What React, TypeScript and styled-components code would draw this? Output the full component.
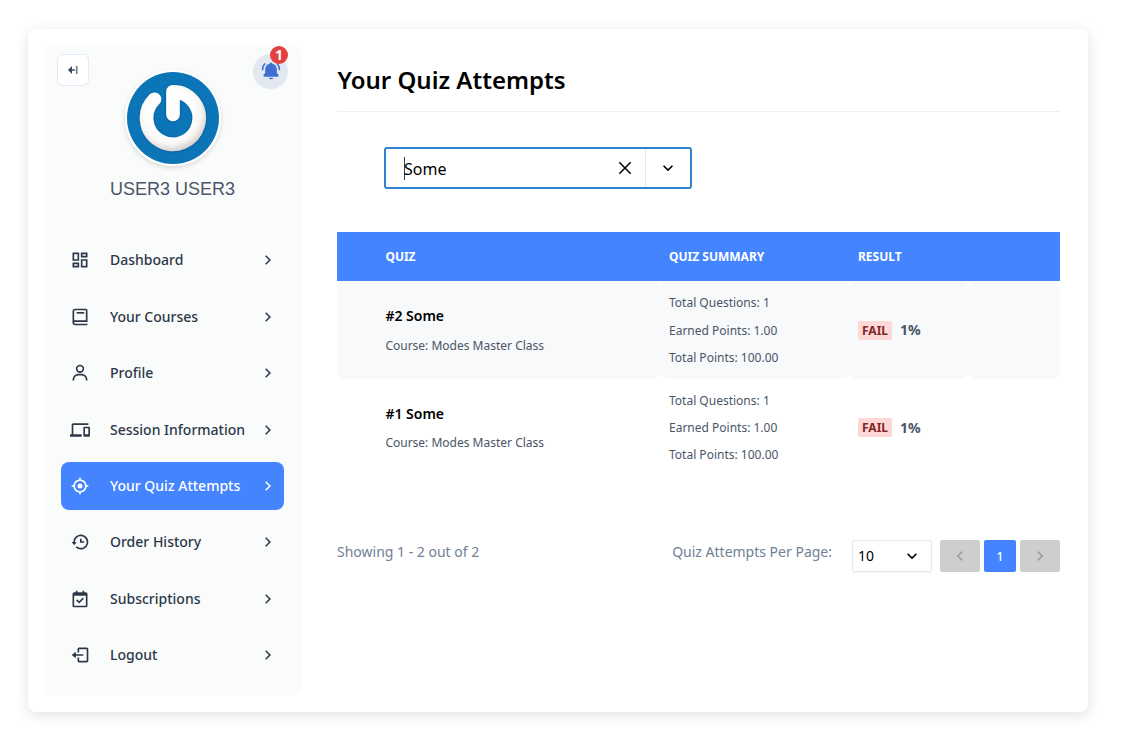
import React from 'react';
import styled, { createGlobalStyle } from 'styled-components';
import type { IconType } from 'react-icons';
import {
  BiBook,
  BiCalendarCheck,
  BiHistory,
  BiLogOut,
  BiSolidBellRing,
  BiTargetLock,
  BiUser,
} from 'react-icons/bi';
import {
  MdChevronLeft,
  MdChevronRight,
  MdDevices,
  MdExpandMore,
  MdOutlineDashboard,
} from 'react-icons/md';
import { RiArrowRightSLine } from 'react-icons/ri';

const GlobalStyle = createGlobalStyle`
  *, *::before, *::after { box-sizing: border-box; }
  body {
    margin: 0;
    background: #fff;
    color: #000;
    font-family: "Noto Sans", sans-serif;
    font-size: 16px;
    overflow: hidden;
  }
  button { font: inherit; border: 0; padding: 0; }
  h1, p { margin: 0; }
`;

const Page = styled.div`
  height: 745px;
  padding: 29px 37px 33px 28px;
`;

const Card = styled.div`
  display: flex;
  height: 683px;
  padding: 16px 28px 16px 16px;
  background: #fff;
  border-radius: 8px;
  box-shadow: 0 3px 14px rgba(0, 0, 0, 0.12);
`;

const Sidebar = styled.aside`
  flex: 0 0 257px;
  display: flex;
  flex-direction: column;
  background: #fafcfc;
  border-radius: 8px;
`;

const SidebarTop = styled.div`
  display: flex;
  justify-content: space-between;
  align-items: flex-start;
  height: 122px;
  padding: 9px 13px 0;
`;

const CollapseButton = styled.button`
  display: grid;
  place-items: center;
  width: 32px;
  height: 32px;
  background: #fff;
  border: 1px solid #e6e9fd;
  border-radius: 6px;
`;

const Avatar = styled.div`
  width: 96px;
  height: 96px;
  margin: 16px 0 0 4px;
  border: 2px solid #fff;
  border-radius: 50%;
  box-shadow: 0 2px 5px rgba(0, 0, 0, 0.14);
  svg { display: block; width: 92px; height: 92px; border-radius: 50%; }
`;

const Bell = styled.div`
  position: relative;
  display: grid;
  place-items: center;
  width: 35px;
  height: 35px;
  padding-bottom: 1px;
  background: #e2e8f0;
  color: #3f6fd1;
  border-radius: 50%;
`;

const BellCount = styled.span`
  position: absolute;
  top: -8px;
  right: 0;
  width: 18px;
  height: 18px;
  border-radius: 50%;
  background: #e53e3e;
  color: #fff;
  font-size: 14px;
  font-weight: 700;
  line-height: 18px;
  text-align: center;
`;

const UserName = styled.p`
  margin-top: 10px;
  height: 24px;
  color: #4a5568;
  font: 18px/24px "Liberation Sans", Arial, sans-serif;
  text-align: center;
`;

const Menu = styled.nav`
  display: flex;
  flex-direction: column;
  gap: 8px;
  padding: 35.4px 17px 0;
`;

const MenuItem = styled.a<{ $active?: boolean }>`
  display: flex;
  align-items: center;
  height: 48.4px;
  padding: 0 7px 0.4px 9px;
  border-radius: 8px;
  background: ${(p) => (p.$active ? '#4484ff' : 'transparent')};
  color: ${(p) => (p.$active ? '#fff' : '#2d3748')};
  font-size: 14px;
  font-weight: 500;
`;

const MenuLabel = styled.span`
  flex: 1;
  padding: 0 0 1px 20px;
  white-space: nowrap;
`;

const Main = styled.main`
  flex: 1;
  margin-left: 36px;
  min-width: 0;
`;

const Title = styled.h1`
  height: 67px;
  padding: 17px 0 0 0.4px;
  border-bottom: 1px solid #edf0f2;
  font-size: 24px;
  font-weight: 600;
  line-height: 36px;
`;

const Combo = styled.div`
  display: flex;
  width: 308px;
  height: 42px;
  margin: 35px 0 0 47px;
  border: 2px solid #3182ce;
  border-radius: 3px;
`;

const ComboValue = styled.div`
  flex: 1;
  display: flex;
  align-items: center;
  padding-left: 18px;
  line-height: 24px;
`;

const ComboText = styled.span`
  padding-top: 2px;
`;

const Caret = styled.span`
  width: 1px;
  height: 23px;
  margin-right: -1px;
  background: #333a48;
`;

const ComboAction = styled.button<{ $divided?: boolean }>`
  display: grid;
  place-items: center;
  width: ${(p) => (p.$divided ? '45px' : '40px')};
  background: transparent;
  border-left: ${(p) => (p.$divided ? '1px solid #e2e8f0' : '0')};
`;

const Table = styled.table`
  width: 100%;
  margin-top: 43px;
  table-layout: fixed;
  border-collapse: separate;
  border-spacing: 0;
`;

const HeadCell = styled.th`
  height: 49px;
  padding: 0 0 0 8px;
  background: #4484ff;
  color: #fff;
  font-size: 12px;
  font-weight: 700;
  line-height: 16px;
  text-align: left;
  &:first-child { padding-left: 48.4px; }
`;

const Cell = styled.td<{ $shaded?: boolean }>`
  height: 97.5px;
  padding: 1px 0 0 8px;
  background: ${(p) => (p.$shaded ? '#f7f9fb' : 'transparent')};
  border-radius: 8px;
  vertical-align: middle;
  &:first-child { padding-left: 48.4px; }
`;

const QuizName = styled.p`
  font-size: 14px;
  font-weight: 600;
  line-height: 21px;
`;

const CourseName = styled.p`
  margin-top: 10.8px;
  padding-bottom: 0.4px;
  color: #4a5568;
  font-size: 12px;
  line-height: 18px;
`;

const SummaryLine = styled.p`
  color: #4a5568;
  font-size: 12px;
  line-height: 27.2px;
`;

const Result = styled.div`
  display: flex;
  align-items: center;
  gap: 8px;
  color: #4a5568;
  font-size: 14px;
  font-weight: 700;
`;

const Percent = styled.span`
  padding-bottom: 0.8px;
`;

const FailTag = styled.span`
  height: 19.4px;
  padding: 0 4px;
  border-radius: 2px;
  background: #fed7d7;
  color: #822727;
  font-size: 12px;
  line-height: 19.4px;
`;

const Footer = styled.footer`
  display: flex;
  align-items: flex-start;
  margin-top: 64px;
  color: #718096;
  font-size: 14px;
  line-height: 24px;
`;

const Showing = styled.span`
  flex: 1;
`;

const PageSize = styled.div`
  display: flex;
  align-items: center;
  justify-content: space-between;
  width: 80px;
  height: 32px;
  margin: 0 8px 0 20px;
  padding: 0 9px 0 5px;
  border: 1px solid #e2e8f0;
  border-radius: 2px;
  box-shadow: 0 1px 2px rgba(0, 0, 0, 0.05);
  color: #000;
`;

const Pager = styled.div`
  display: flex;
  gap: 4px;
`;

const PagerButton = styled.button<{ $current?: boolean }>`
  display: grid;
  place-items: center;
  width: ${(p) => (p.$current ? '32px' : '40px')};
  height: 32px;
  padding-top: ${(p) => (p.$current ? '1px' : '0')};
  border-radius: 2px;
  background: ${(p) => (p.$current ? '#4484ff' : '#cecece')};
  color: ${(p) => (p.$current ? '#fff' : '#a0a0a0')};
  font-size: 12px;
  font-weight: 500;
`;

const menu: { label: string; icon: IconType; active?: boolean }[] = [
  { label: 'Dashboard', icon: MdOutlineDashboard },
  { label: 'Your Courses', icon: BiBook },
  { label: 'Profile', icon: BiUser },
  { label: 'Session Information', icon: MdDevices },
  { label: 'Your Quiz Attempts', icon: BiTargetLock, active: true },
  { label: 'Order History', icon: BiHistory },
  { label: 'Subscriptions', icon: BiCalendarCheck },
  { label: 'Logout', icon: BiLogOut },
];

const attempts = [
  { name: '#2 Some', questions: '1', earned: '1.00', total: '100.00', percent: '1%' },
  { name: '#1 Some', questions: '1', earned: '1.00', total: '100.00', percent: '1%' },
];

const CollapseIcon = () => (
  <svg width="10" height="8" viewBox="0 0 10 8">
    <path d="M0 4 4 0v3.3h2.9v1.4H4V8z" fill="#3c485c" />
    <rect x="7.9" y="0" width="1.6" height="8" fill="#6b7688" />
  </svg>
);

const ClearIcon = () => (
  <svg width="14" height="14" viewBox="0 0 14 14">
    <path d="M1.3 1.3 12.7 12.7M12.7 1.3 1.3 12.7" stroke="#000" strokeWidth="1.5" />
  </svg>
);

const PowerAvatar = () => (
  <svg viewBox="0 0 92 92">
    <defs>
      <radialGradient id="ring" gradientUnits="userSpaceOnUse" cx="43" cy="41" r="38">
        <stop offset="0.6" stopColor="#fff" />
        <stop offset="0.82" stopColor="#f7f6f5" />
        <stop offset="1" stopColor="#d6d4d2" />
      </radialGradient>
      <filter id="relief" filterUnits="userSpaceOnUse" x="0" y="0" width="92" height="92">
        <feDropShadow dx="0" dy="0.3" stdDeviation="0.8" floodColor="#043a60" floodOpacity="0.6" />
      </filter>
    </defs>
    <rect width="92" height="92" fill="#0b75b7" />
    <path
      d="M27.5 27.2A26.3 26.3 0 1 0 46 19.7V42.5"
      fill="none"
      stroke="url(#ring)"
      strokeWidth="13.6"
      strokeLinecap="round"
      strokeLinejoin="round"
      filter="url(#relief)"
    />
  </svg>
);

export default function App() {
  return (
    <Page>
      <GlobalStyle />
      <Card>
        <Sidebar>
          <SidebarTop>
            <CollapseButton aria-label="Collapse menu">
              <CollapseIcon />
            </CollapseButton>
            <Avatar>
              <PowerAvatar />
            </Avatar>
            <Bell>
              <BiSolidBellRing size={20} />
              <BellCount>1</BellCount>
            </Bell>
          </SidebarTop>
          <UserName>USER3 USER3</UserName>
          <Menu>
            {menu.map(({ label, icon: Icon, active }) => (
              <MenuItem key={label} $active={active}>
                <Icon size={20} />
                <MenuLabel>{label}</MenuLabel>
                <RiArrowRightSLine size={18} />
              </MenuItem>
            ))}
          </Menu>
        </Sidebar>
        <Main>
          <Title>Your Quiz Attempts</Title>
          <Combo>
            <ComboValue>
              <Caret />
              <ComboText>Some</ComboText>
            </ComboValue>
            <ComboAction aria-label="Clear">
              <ClearIcon />
            </ComboAction>
            <ComboAction $divided aria-label="Open">
              <MdExpandMore size={20} />
            </ComboAction>
          </Combo>
          <Table>
            <colgroup>
              <col width={324} />
              <col width={189} />
              <col width={119} />
              <col width={91} />
            </colgroup>
            <thead>
              <tr>
                <HeadCell>QUIZ</HeadCell>
                <HeadCell>QUIZ SUMMARY</HeadCell>
                <HeadCell>RESULT</HeadCell>
                <HeadCell />
              </tr>
            </thead>
            <tbody>
              {attempts.map((a, i) => (
                <tr key={a.name}>
                  <Cell $shaded={i % 2 === 0}>
                    <QuizName>{a.name}</QuizName>
                    <CourseName>Course: Modes Master Class</CourseName>
                  </Cell>
                  <Cell $shaded={i % 2 === 0}>
                    <SummaryLine>Total Questions: {a.questions}</SummaryLine>
                    <SummaryLine>Earned Points: {a.earned}</SummaryLine>
                    <SummaryLine>Total Points: {a.total}</SummaryLine>
                  </Cell>
                  <Cell $shaded={i % 2 === 0}>
                    <Result>
                      <FailTag>FAIL</FailTag>
                      <Percent>{a.percent}</Percent>
                    </Result>
                  </Cell>
                  <Cell $shaded={i % 2 === 0} />
                </tr>
              ))}
            </tbody>
          </Table>
          <Footer>
            <Showing>Showing 1 - 2 out of 2</Showing>
            <span>Quiz Attempts Per Page:</span>
            <PageSize>
              10
              <MdExpandMore size={20} />
            </PageSize>
            <Pager>
              <PagerButton aria-label="Previous">
                <MdChevronLeft size={20} />
              </PagerButton>
              <PagerButton $current>1</PagerButton>
              <PagerButton aria-label="Next">
                <MdChevronRight size={20} />
              </PagerButton>
            </Pager>
          </Footer>
        </Main>
      </Card>
    </Page>
  );
}
